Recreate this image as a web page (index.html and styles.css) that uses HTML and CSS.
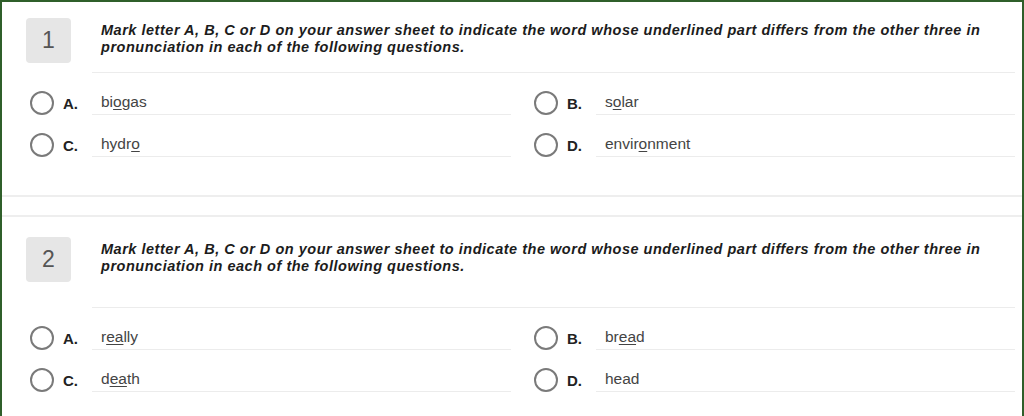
FILE: index.html
```html
<!DOCTYPE html>
<html lang="en">
<head>
<meta charset="utf-8">
<title>Questions</title>
<link rel="stylesheet" href="styles.css">
</head>
<body>
<div class="frame">
  <section class="card card--first">
    <div class="q-head">
      <div class="q-num">1</div>
      <div class="q-body">
        <p class="q-text">Mark letter A, B, C or D on your answer sheet to indicate the word whose underlined part differs from the other three in<br>pronunciation in each of the following questions.</p>
      </div>
    </div>
    <div class="options">
      <div class="opt"><span class="radio"></span><span class="letter">A.</span><span class="answer">bi<u>o</u>gas</span></div>
      <div class="opt"><span class="radio"></span><span class="letter">B.</span><span class="answer">s<u>o</u>lar</span></div>
      <div class="opt"><span class="radio"></span><span class="letter">C.</span><span class="answer">hydr<u>o</u></span></div>
      <div class="opt"><span class="radio"></span><span class="letter">D.</span><span class="answer">envir<u>o</u>nment</span></div>
    </div>
  </section>
  <section class="card">
    <div class="q-head">
      <div class="q-num">2</div>
      <div class="q-body">
        <p class="q-text">Mark letter A, B, C or D on your answer sheet to indicate the word whose underlined part differs from the other three in<br>pronunciation in each of the following questions.</p>
        <div class="q-blank"></div>
      </div>
    </div>
    <div class="options">
      <div class="opt"><span class="radio"></span><span class="letter">A.</span><span class="answer">r<u>ea</u>lly</span></div>
      <div class="opt"><span class="radio"></span><span class="letter">B.</span><span class="answer">br<u>ea</u>d</span></div>
      <div class="opt"><span class="radio"></span><span class="letter">C.</span><span class="answer">d<u>ea</u>th</span></div>
      <div class="opt"><span class="radio"></span><span class="letter">D.</span><span class="answer">head</span></div>
    </div>
  </section>
</div>
</body>
</html>
```
FILE: styles.css
```css
html, body {
  margin: 0;
  padding: 0;
}
body {
  background: #ffffff;
  font-family: "Liberation Sans", Arial, sans-serif;
  height: 416px;
  overflow: hidden;
}
.frame {
  border: 2px solid #2f5f2a;
  border-bottom: none;
  min-height: 414px;
  box-sizing: border-box;
}
.card {
  padding: 20px 7px 38.5px 24px;
  border-top: 2px solid #eeeeee;
  border-bottom: 2px solid #eeeeee;
}
.card--first {
  border-top: none;
  padding-top: 16px;
}
.card + .card {
  margin-top: 18px;
}
.q-head {
  display: flex;
}
.q-num {
  flex: none;
  width: 45px;
  height: 45px;
  margin-right: 21px;
  background: #e6e6e6;
  border-radius: 4px;
  display: flex;
  align-items: center;
  justify-content: center;
  font-size: 23px;
  color: #555555;
}
.q-body {
  flex: 1;
  margin-top: 4px;
  padding: 0 0 16px 9px;
  border-bottom: 1px solid #ececec;
}
.q-text {
  margin: 0;
  font-size: 14.5px;
  line-height: 17px;
  letter-spacing: 0.52px;
  font-weight: bold;
  font-style: italic;
  color: #1c1c1c;
  white-space: nowrap;
}
.q-blank {
  height: 16px;
}
.options {
  display: grid;
  grid-template-columns: 1fr 1fr;
  column-gap: 23px;
  row-gap: 17.5px;
  padding: 18px 0 0 4px;
}
.opt {
  display: flex;
  align-items: center;
}
.radio {
  flex: none;
  width: 24px;
  height: 24px;
  box-sizing: border-box;
  border: 2px solid #7a7a7a;
  border-radius: 50%;
  margin-right: 9px;
}
.letter {
  flex: none;
  width: 29px;
  font-size: 15px;
  line-height: 18px;
  font-weight: bold;
  color: #222222;
  padding-top: 2px;
}
.answer {
  flex: 1;
  padding: 2px 0 3px 9px;
  font-size: 15.5px;
  line-height: 18px;
  color: #444444;
  border-bottom: 1px solid #ececec;
}
.answer u {
  text-decoration-thickness: 1px;
  text-underline-offset: 2px;
}
```
